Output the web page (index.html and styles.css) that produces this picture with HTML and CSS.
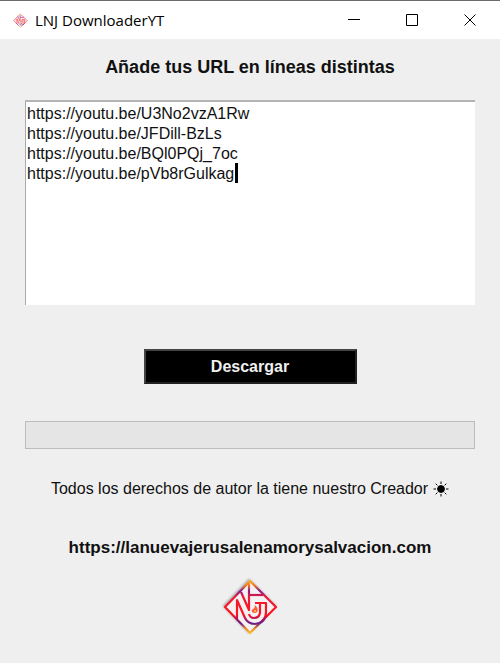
FILE: index.html
```html
<!DOCTYPE html>
<html lang="es">
<head>
<meta charset="utf-8">
<title>LNJ DownloaderYT</title>
<link rel="stylesheet" href="styles.css">
</head>
<body>
<svg class="defs" aria-hidden="true">
  <defs>
    <linearGradient id="ink" gradientUnits="userSpaceOnUse" x1="0" y1="2" x2="0" y2="56">
      <stop offset="0" stop-color="#ffb52a"/>
      <stop offset=".1" stop-color="#f0761f"/>
      <stop offset=".2" stop-color="#8a1a8c"/>
      <stop offset=".32" stop-color="#f01a34"/>
      <stop offset=".64" stop-color="#ff1420"/>
      <stop offset=".8" stop-color="#6a1a8c"/>
      <stop offset=".9" stop-color="#f08a20"/>
      <stop offset="1" stop-color="#ffc52a"/>
    </linearGradient>
    <symbol id="logo" viewBox="0 0 57 57">
      <path d="M28 3 54 29 28 55 3 29Z" fill="#f4f1f2"/>
      <g fill="none" stroke="url(#ink)" stroke-width="2.2" stroke-linejoin="round">
        <path d="M28 3 54 29 28 55 3 29Z"/>
        <path d="M15 41V22L23 40Q26 46 33 46Q44 45 44 34V25H33"/>
        <path d="M19 14 27 32V5"/>
        <path d="M27 17H41"/>
        <path d="M38 25V35Q37 40 32 40Q28 40 27 36"/>
      </g>
      <path d="M33 27Q37 31 35 34Q33 36 30 34Q29 32 31 31Q33 30 33 27Z" fill="#ff5a38"/>
      <circle cx="33" cy="33" r="1" fill="#ffd34a"/>
    </symbol>
  </defs>
</svg>
<header class="titlebar">
  <svg class="app-icon" aria-hidden="true"><use href="#logo"/></svg>
  <span class="app-name">LNJ DownloaderYT</span>
  <button class="win-btn" aria-label="Minimizar"><svg viewBox="0 0 12 12"><path d="M0 5.5H12"/></svg></button>
  <button class="win-btn" aria-label="Maximizar"><svg viewBox="0 0 12 12"><path d="M.5 .5H11.5V11.5H.5Z"/></svg></button>
  <button class="win-btn" aria-label="Cerrar"><svg viewBox="0 0 12 12"><path d="M.5 .5 11.5 11.5M11.5 .5 .5 11.5"/></svg></button>
</header>
<main class="content">
  <label class="heading" for="urls">Añade tus URL en líneas distintas</label>
  <div class="editor">
    <textarea id="urls" class="urls" spellcheck="false">https://youtu.be/U3No2vzA1Rw
https://youtu.be/JFDill-BzLs
https://youtu.be/BQl0PQj_7oc
https://youtu.be/pVb8rGulkag</textarea>
    <span class="caret"></span>
  </div>
  <button class="download">Descargar</button>
  <div class="progress" role="progressbar" aria-label="Progreso" aria-valuenow="0"></div>
  <p class="rights">Todos los derechos de autor la tiene nuestro Creador
    <svg class="sun" viewBox="0 0 16 16" aria-hidden="true"><circle cx="8" cy="8" r="3.4"/><path d="M8 .5V3M8 13V15.5M.5 8H3M13 8H15.5M2.7 2.7 4.4 4.4M11.6 11.6 13.3 13.3M2.7 13.3 4.4 11.6M11.6 4.4 13.3 2.7"/></svg>
  </p>
  <a class="site" href="https://lanuevajerusalenamorysalvacion.com">https://lanuevajerusalenamorysalvacion.com</a>
  <svg class="logo" role="img" aria-label="LNJ"><use href="#logo"/></svg>
</main>
</body>
</html>
```
FILE: styles.css
```css
* { box-sizing: border-box; }
body {
  margin: 0;
  min-height: 100vh;
  background: #efefef;
  color: #111;
  font: 16px/20px "Liberation Sans", Arial, sans-serif;
}
.defs { position: absolute; width: 0; height: 0; }
.titlebar {
  display: flex;
  align-items: center;
  height: 39px;
  padding: 0 1px 0 13px;
  border-top: 1px solid #6b6b6b;
  background: #fff;
}
.app-icon { width: 15px; height: 15px; }
.app-name {
  flex: 1;
  padding-left: 7px;
  font: 15px/20px "Open Sans", "Noto Sans", sans-serif;
  color: #000;
}
.win-btn {
  display: flex;
  align-items: center;
  justify-content: center;
  width: 58px;
  height: 38px;
  padding: 0;
  border: 0;
  background: none;
}
.win-btn svg { width: 12px; height: 12px; fill: none; stroke: #000; }
.content {
  display: flex;
  flex-direction: column;
  align-items: center;
  padding: 16px 25px 28px;
}
.heading { font-size: 18px; line-height: 24px; font-weight: bold; }
.editor { position: relative; align-self: stretch; margin-top: 21px; }
.urls {
  display: block;
  width: 100%;
  height: 205px;
  padding: 2px 1px;
  border: 0 solid #a9a9a9;
  border-width: 2px 0 0 1px;
  border-top-color: #b4b4b4;
  background: #fff;
  color: #111;
  font: inherit;
  resize: none;
  outline: 0;
}
.caret { position: absolute; left: 210px; top: 63px; width: 3px; height: 20px; background: #000; }
.download {
  width: 213px;
  height: 35px;
  margin-top: 44px;
  padding: 0;
  border: 2px solid;
  border-color: #444 #222 #222 #444;
  background: #000;
  color: #f0f0f0;
  font: bold 16px/20px "Liberation Sans", Arial, sans-serif;
}
.progress {
  align-self: stretch;
  height: 28px;
  margin-top: 37px;
  border: 1px solid #bcbcbc;
  background: #e5e5e5;
}
.rights { display: flex; align-items: center; gap: 5px; margin: 30px 0 0; white-space: nowrap; }
.sun { width: 16px; height: 16px; fill: #000; stroke: #000; stroke-width: 1; }
.site { margin-top: 39px; color: #111; font-size: 17px; font-weight: bold; text-decoration: none; }
.logo { width: 57px; height: 57px; margin-top: 20px; filter: drop-shadow(-1px -1px 1px #aaa); }
```
